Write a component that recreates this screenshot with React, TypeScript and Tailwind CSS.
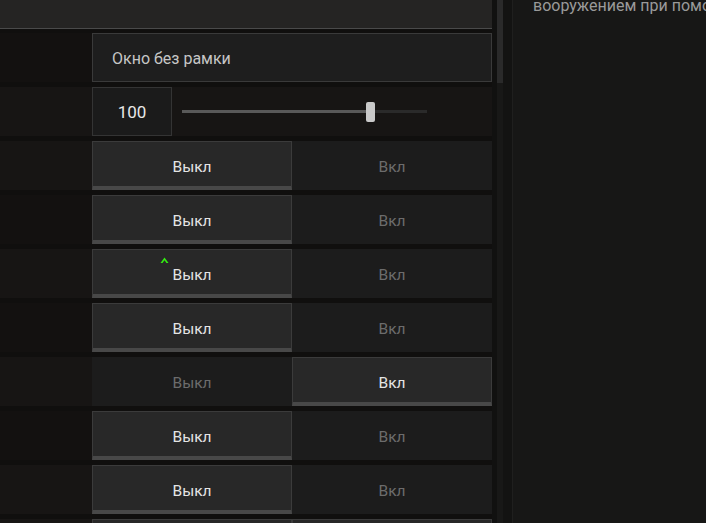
import React from "react";

type Toggle = { on: boolean; cursor?: boolean };

const toggles: Toggle[] = [
    { on: false },
    { on: false },
    { on: false, cursor: true },
    { on: false },
    { on: true },
    { on: false },
    { on: false },
];

function ToggleButton({ active, label }: { active: boolean; label: string }) {
    if (active) {
        return (
            <div className="flex h-full w-[200px] items-center justify-center border border-b-4 border-[#3b3b3b] border-b-[#484848] bg-[#282828] pt-[7px] text-[15.5px] text-[#e4e4e4]">
                {label}
            </div>
        );
    }
    return (
        <div className="flex h-full w-[200px] items-center justify-center bg-[#1c1c1c] pt-[4px] text-[15.5px] text-[#6c6c6c]">
            {label}
        </div>
    );
}

function Row({ children, shade }: { children: React.ReactNode; shade: boolean }) {
    return (
        <div className={"flex h-[49px] shrink-0 " + (shade ? "bg-[#171514]" : "bg-[#131110]")}>
            <div className="w-[92px] shrink-0" />
            <div className="flex w-[400px] shrink-0">{children}</div>
        </div>
    );
}

export default function App() {
    return (
        <div
            className="flex h-[523px] w-[706px] overflow-hidden bg-[#100f0e]"
            style={{ fontFamily: "Roboto, 'Noto Sans', sans-serif" }}
        >
            {/* settings list */}
            <div className="flex w-[492px] shrink-0 flex-col">
                <div className="h-[29px] shrink-0 border-b border-[#4a4a4a] bg-[#252423]" />
                <div className="flex flex-col gap-[5px] pt-[4px]">
                    <Row shade={false}>
                        <div className="flex h-full w-[400px] items-center border border-[#3a3a3a] bg-[#1e1e1e] pl-[19px] pt-[2px] text-[16px] text-[#c6c6c6]">
                            Окно без рамки
                        </div>
                    </Row>
                    <Row shade={true}>
                        <div className="flex h-full w-[80px] items-center justify-center border border-[#343434] bg-[#1b1b1b] pt-[2px] text-[17px] text-[#e8e8e8]">
                            100
                        </div>
                        <div className="relative ml-[10px] flex w-[245px] items-center">
                            <div className="h-[3px] w-[184px] bg-[#595959]" />
                            <div className="h-[3px] flex-1 bg-[#2a2a2a]" />
                            <div className="absolute left-[184px] top-[15px] h-[20px] w-[9px] rounded-[2px] bg-[#c9c9c9]" />
                        </div>
                    </Row>
                    {toggles.map((t, i) => (
                        <Row key={i} shade={i % 2 === 0}>
                            <div className="relative flex h-full">
                                <ToggleButton active={!t.on} label="Выкл" />
                                <ToggleButton active={t.on} label="Вкл" />
                                {t.cursor && (
                                    <svg
                                        className="absolute left-[68px] top-[8px]"
                                        width="9"
                                        height="7"
                                        viewBox="0 0 9 7"
                                    >
                                        <path d="M4.5 0.5 L8.5 6 L6.5 6 L4.5 3.2 L2.5 6 L0.5 6 Z" fill="#33ee11" />
                                    </svg>
                                )}
                            </div>
                        </Row>
                    ))}
                    <Row shade={true}>
                        <div className="h-full w-[200px] border border-[#3b3b3b] bg-[#282828]" />
                        <div className="h-full w-[200px] border border-[#3b3b3b] bg-[#282828]" />
                    </Row>
                </div>
            </div>

            {/* scrollbar */}
            <div className="w-[5px] shrink-0 bg-[#111110]" />
            <div className="flex w-[6px] shrink-0 flex-col bg-[#181817]">
                <div className="h-[83px] bg-[#2a2a2a]" />
            </div>
            <div className="w-[9px] shrink-0 bg-[#131312]" />
            <div className="w-px shrink-0 bg-[#1f1f1e]" />

            {/* description panel */}
            <div className="min-w-0 flex-1 overflow-hidden bg-[#171716] pl-[20px]">
                <div className="-mt-[6px] whitespace-nowrap text-[16px] text-[#9a9a9a]">
                    вооружением при помо
                </div>
            </div>
        </div>
    );
}
